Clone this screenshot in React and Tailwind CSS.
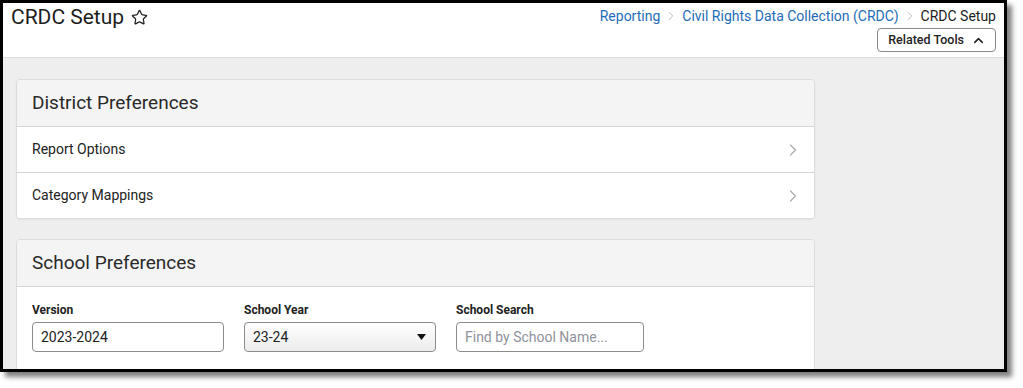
import React from "react";
import { Star, ChevronRight, ChevronUp } from "lucide-react";

const Crumb = ({ children }) => (
  <span className="text-[#1f6db5] hover:underline cursor-pointer">{children}</span>
);

const Sep = () => <ChevronRight size={14} strokeWidth={1.5} className="text-[#b4b4b4] mx-[4px]" />;

const NavRow = ({ label, last }) => (
  <div
    className={`flex items-center justify-between pl-[15px] pr-[11px] bg-white ${
      last ? "h-[45px]" : "h-[46px] border-b border-[#d6d6d6]"
    }`}
  >
    <span className="text-[14px] text-[#222]">{label}</span>
    <ChevronRight size={20} strokeWidth={1.3} className="text-[#a8a8a8]" />
  </div>
);

const Field = ({ label, children, width }) => (
  <div className={`flex flex-col ${width}`}>
    <label className="text-[12px] leading-[16px] font-bold text-[#222] mb-[4px]">{label}</label>
    {children}
  </div>
);

export default function App() {
  return (
    <div className="w-[1023px] h-[388px] bg-white overflow-hidden font-['Roboto',sans-serif]">
      <div className="w-[1007px] h-[372px] border-[3px] border-black bg-[#eeeeee] shadow-[5px_5px_5px_rgba(0,0,0,0.5)] flex flex-col overflow-hidden">
        {/* Page header */}
        <div className="h-[55px] shrink-0 bg-white border-b border-[#dcdcdc] flex justify-between pl-[8px] pr-[8px]">
          <div className="flex items-center gap-[7px] h-[27px] pt-[2px]">
            <h1 className="text-[21px] leading-[25px] text-[#1d1d1d]">CRDC Setup</h1>
            <Star size={17} strokeWidth={1.8} className="text-[#222]" />
          </div>
          <div className="flex flex-col items-end pt-[3px]">
            <div className="flex items-center text-[14px] leading-[20px]">
              <Crumb>Reporting</Crumb>
              <Sep />
              <Crumb>Civil Rights Data Collection (CRDC)</Crumb>
              <Sep />
              <span className="text-[#1d1d1d]">CRDC Setup</span>
            </div>
            <button className="mt-[2px] h-[24px] pl-[10px] pr-[9px] flex items-center gap-[7px] border border-[#8a8a8a] rounded-[4px] bg-white text-[12.5px] font-medium text-[#222]">
              Related Tools
              <ChevronUp size={15} strokeWidth={2.4} />
            </button>
          </div>
        </div>

        {/* Content */}
        <div className="flex-1 pt-[21px] pl-[13px] flex flex-col gap-[20px]">
          <div className="w-[799px] rounded-[4px] border border-[#dcdcdc] overflow-hidden shadow-[0_1px_2px_rgba(0,0,0,0.05)]">
            <div className="h-[47px] bg-[#f4f4f4] border-b border-[#d6d6d6] flex items-center pl-[15px]">
              <h2 className="text-[19px] text-[#2a2a2a]">District Preferences</h2>
            </div>
            <NavRow label="Report Options" />
            <NavRow label="Category Mappings" last />
          </div>

          <div className="w-[799px] rounded-[4px] border border-[#dcdcdc] overflow-hidden bg-white shrink-0">
            <div className="h-[47px] bg-[#f4f4f4] border-b border-[#d6d6d6] flex items-center pl-[15px]">
              <h2 className="text-[19px] text-[#2a2a2a]">School Preferences</h2>
            </div>
            <div className="flex gap-[20px] pl-[15px] pt-[15px] pb-[20px]">
              <Field label="Version" width="w-[192px]">
                <input
                  readOnly
                  value="2023-2024"
                  className="h-[30px] w-full border border-[#8c8c8c] rounded-[4px] px-[8px] text-[14px] text-[#222] bg-white outline-none"
                />
              </Field>
              <Field label="School Year" width="w-[192px]">
                <div className="h-[30px] w-full border border-[#8c8c8c] rounded-[4px] px-[8px] flex items-center justify-between bg-gradient-to-b from-white to-[#ececec] text-[14px] text-[#222]">
                  <span>23-24</span>
                  <svg width="9" height="6" viewBox="0 0 9 6" className="mr-[1px]">
                    <path d="M0 0h9L4.5 6z" fill="#111" />
                  </svg>
                </div>
              </Field>
              <Field label="School Search" width="w-[188px]">
                <input
                  placeholder="Find by School Name..."
                  className="h-[30px] w-full border border-[#8c8c8c] rounded-[4px] px-[8px] text-[14px] text-[#222] placeholder:text-[#8f939b] bg-white outline-none"
                />
              </Field>
            </div>
          </div>
        </div>
      </div>
    </div>
  );
}
